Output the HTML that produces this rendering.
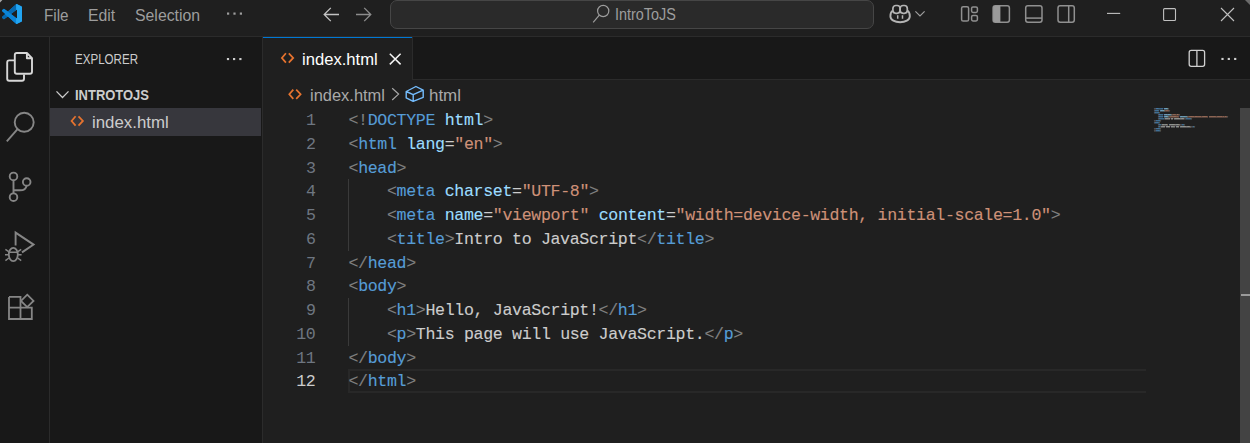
<!DOCTYPE html>
<html lang="en">
<head>
<meta charset="UTF-8">
<title>index.html - IntroToJS - Visual Studio Code</title>
<style>
*{box-sizing:border-box;margin:0;padding:0}
html,body{width:1250px;height:443px;overflow:hidden;background:#181818}
body{position:relative;font-family:"Liberation Sans",sans-serif;color:#ccc}
.abs{position:absolute}
.t{position:absolute;white-space:pre;line-height:1;transform-origin:0 0}
#titlebar{left:0;top:0;width:1250px;height:36px;background:#1f1f1f}
#tb-border{left:0;top:36px;width:1250px;height:1px;background:#2b2b2b}
.menu{color:#9d9d9d;font-size:16px}
#cmd{left:390px;top:0;width:484px;height:29px;background:#2a2a2a;border:1px solid #464646;border-radius:7px}
#activity{left:0;top:37px;width:49px;height:406px;background:#181818}
#act-border{left:49px;top:37px;width:1px;height:406px;background:#2b2b2b}
#sidebar{left:50px;top:37px;width:212px;height:406px;background:#181818}
#side-border{left:262px;top:37px;width:1px;height:406px;background:#2b2b2b}
#row-sel{left:50px;top:108px;width:211px;height:28px;background:#37373d}
#tabs{left:263px;top:37px;width:987px;height:43px;background:#181818}
#tabs-border{left:263px;top:79px;width:987px;height:1px;background:#2b2b2b}
#tab{left:263px;top:37px;width:149px;height:43px;background:#1f1f1f;border-top:1px solid #0078d4}
#tab-r{left:412px;top:37px;width:1px;height:43px;background:#2b2b2b}
#editor{left:263px;top:80px;width:987px;height:363px;background:#1f1f1f}
.ln{color:#6e7681;font-family:"Liberation Mono",monospace;font-size:16.03px;text-align:right;width:40px;left:275px}
.code{font-family:"Liberation Mono",monospace;font-size:16.03px;left:349px;color:#ccc}
.lnr,.cl{height:23.75px;line-height:23.75px;font-family:"Liberation Mono",monospace;font-size:16.6px;letter-spacing:-0.34px;white-space:pre}
.lnr{text-align:right;color:#6e7681}
.cl{color:#ccc;-webkit-text-stroke:0.12px}
.g{color:#808080}.b{color:#569cd6}.a{color:#9cdcfe}.s{color:#ce9178}
#curline{left:348px;top:369px;width:798px;height:24px;border-top:2px solid #282828;border-bottom:2px solid #282828;border-left:2px solid #282828}
.guide{width:1px;background:#3a3a3a;left:348px}
#scroll{left:1240px;top:108px;width:10px;height:335px;background:#434343}
#scroll-mark{left:1241px;top:294px;width:9px;height:2px;background:#9a9a9a}
</style>
</head>
<body>
<!-- title bar -->
<div class="abs" id="titlebar"></div>
<div class="abs" id="tb-border"></div>
<div class="t menu" id="m-file" style="left:43.5px;top:8px;transform:scaleX(.954)">File</div>
<div class="t menu" id="m-edit" style="left:87.9px;top:8px;transform:scaleX(.985)">Edit</div>
<div class="t menu" id="m-sel" style="left:135.2px;top:8px;transform:scaleX(.99)">Selection</div>
<div class="abs" id="cmd"></div>
<div class="t" id="cmd-text" style="left:615.2px;top:6.5px;transform:scaleX(.925);font-size:15.6px;color:#9d9d9d">IntroToJS</div>

<!-- activity bar -->
<div class="abs" id="activity"></div>
<div class="abs" id="act-border"></div>

<!-- side bar -->
<div class="abs" id="sidebar"></div>
<div class="abs" id="side-border"></div>
<div class="t" id="sb-title" style="left:74.5px;top:53px;transform:scaleX(.842);font-size:13.75px;color:#ccc">EXPLORER</div>
<div class="t" id="sb-folder" style="left:74.6px;top:89px;transform:scaleX(.943);font-size:13.75px;font-weight:bold;color:#ccc">INTROTOJS</div>
<div class="abs" id="row-sel"></div>
<div class="t" id="sb-file" style="left:92px;top:114px;transform:scaleX(1.035);font-size:16.25px;color:#ccc">index.html</div>

<!-- tabs -->
<div class="abs" id="tabs"></div>
<div class="abs" id="tabs-border"></div>
<div class="abs" id="tab"></div>
<div class="abs" id="tab-r"></div>
<div class="t" id="tab-label" style="left:302.2px;top:51px;transform:scaleX(1.022);font-size:16.25px;color:#fff">index.html</div>

<!-- editor -->
<div class="abs" id="editor"></div>
<div class="t" id="bc-file" style="left:309.8px;top:87px;transform:scaleX(1.012);font-size:16.25px;color:#a9a9a9">index.html</div>
<div class="t" id="bc-html" style="left:428.8px;top:87px;transform:scaleX(1.04);font-size:16.25px;color:#a9a9a9">html</div>

<div class="abs" id="curline"></div>
<div class="abs guide" style="top:179px;height:72px"></div>
<div class="abs guide" style="top:298px;height:48px"></div>


<div class="abs" id="lines" style="left:275.5px;top:109px;width:40px">
<div class="lnr">1</div><div class="lnr">2</div><div class="lnr">3</div><div class="lnr">4</div><div class="lnr">5</div><div class="lnr">6</div><div class="lnr">7</div><div class="lnr">8</div><div class="lnr">9</div><div class="lnr">10</div><div class="lnr">11</div><div class="lnr" style="color:#ccc">12</div>
</div>
<div class="abs" id="code" style="left:348.5px;top:109px">
<div class="cl" id="c1"><span class="g">&lt;!</span><span class="b">DOCTYPE</span> <span class="a">html</span><span class="g">&gt;</span></div>
<div class="cl" id="c2"><span class="g">&lt;</span><span class="b">html</span> <span class="a">lang</span>=<span class="s">"en"</span><span class="g">&gt;</span></div>
<div class="cl" id="c3"><span class="g">&lt;</span><span class="b">head</span><span class="g">&gt;</span></div>
<div class="cl" id="c4">    <span class="g">&lt;</span><span class="b">meta</span> <span class="a">charset</span>=<span class="s">"UTF-8"</span><span class="g">&gt;</span></div>
<div class="cl" id="c5">    <span class="g">&lt;</span><span class="b">meta</span> <span class="a">name</span>=<span class="s">"viewport"</span> <span class="a">content</span>=<span class="s">"width=device-width, initial-scale=1.0"</span><span class="g">&gt;</span></div>
<div class="cl" id="c6">    <span class="g">&lt;</span><span class="b">title</span><span class="g">&gt;</span>Intro to JavaScript<span class="g">&lt;/</span><span class="b">title</span><span class="g">&gt;</span></div>
<div class="cl" id="c7"><span class="g">&lt;/</span><span class="b">head</span><span class="g">&gt;</span></div>
<div class="cl" id="c8"><span class="g">&lt;</span><span class="b">body</span><span class="g">&gt;</span></div>
<div class="cl" id="c9">    <span class="g">&lt;</span><span class="b">h1</span><span class="g">&gt;</span>Hello, JavaScript!<span class="g">&lt;/</span><span class="b">h1</span><span class="g">&gt;</span></div>
<div class="cl" id="c10">    <span class="g">&lt;</span><span class="b">p</span><span class="g">&gt;</span>This page will use JavaScript.<span class="g">&lt;/</span><span class="b">p</span><span class="g">&gt;</span></div>
<div class="cl" id="c11"><span class="g">&lt;/</span><span class="b">body</span><span class="g">&gt;</span></div>
<div class="cl" id="c12"><span class="g">&lt;/</span><span class="b">html</span><span class="g">&gt;</span></div>
</div>
<div class="abs" id="mini" style="left:1154px;top:108px;transform-origin:0 0;transform:scale(0.10395,0.08421);font-weight:bold">
<div class="cl"><span class="g">&lt;!</span><span class="b">DOCTYPE</span> <span class="a">html</span><span class="g">&gt;</span></div>
<div class="cl"><span class="g">&lt;</span><span class="b">html</span> <span class="a">lang</span>=<span class="s">"en"</span><span class="g">&gt;</span></div>
<div class="cl"><span class="g">&lt;</span><span class="b">head</span><span class="g">&gt;</span></div>
<div class="cl">    <span class="g">&lt;</span><span class="b">meta</span> <span class="a">charset</span>=<span class="s">"UTF-8"</span><span class="g">&gt;</span></div>
<div class="cl">    <span class="g">&lt;</span><span class="b">meta</span> <span class="a">name</span>=<span class="s">"viewport"</span> <span class="a">content</span>=<span class="s">"width=device-width, initial-scale=1.0"</span><span class="g">&gt;</span></div>
<div class="cl">    <span class="g">&lt;</span><span class="b">title</span><span class="g">&gt;</span>Intro to JavaScript<span class="g">&lt;/</span><span class="b">title</span><span class="g">&gt;</span></div>
<div class="cl"><span class="g">&lt;/</span><span class="b">head</span><span class="g">&gt;</span></div>
<div class="cl"><span class="g">&lt;</span><span class="b">body</span><span class="g">&gt;</span></div>
<div class="cl">    <span class="g">&lt;</span><span class="b">h1</span><span class="g">&gt;</span>Hello, JavaScript!<span class="g">&lt;/</span><span class="b">h1</span><span class="g">&gt;</span></div>
<div class="cl">    <span class="g">&lt;</span><span class="b">p</span><span class="g">&gt;</span>This page will use JavaScript.<span class="g">&lt;/</span><span class="b">p</span><span class="g">&gt;</span></div>
<div class="cl"><span class="g">&lt;/</span><span class="b">body</span><span class="g">&gt;</span></div>
<div class="cl"><span class="g">&lt;/</span><span class="b">html</span><span class="g">&gt;</span></div>
</div>
<div class="abs" id="scroll"></div>
<div class="abs" id="scroll-mark"></div>

<svg class="abs" id="icons" style="left:0;top:0" width="1250" height="443" viewBox="0 0 1250 443" fill="none" stroke-linecap="butt">
<!-- vscode logo -->
<g transform="translate(2,4) scale(0.8333)">
<clipPath id="lg"><path d="M23.15 2.587L18.21.21a1.494 1.494 0 0 0-1.705.29l-9.46 8.63-4.12-3.128a.999.999 0 0 0-1.276.057L.327 7.261A1 1 0 0 0 .326 8.74L3.899 12 .326 15.26a1 1 0 0 0 .001 1.479L1.65 17.94a.999.999 0 0 0 1.276.057l4.12-3.128 9.46 8.63a1.492 1.492 0 0 0 1.704.29l4.942-2.377A1.5 1.5 0 0 0 24 20.06V3.939a1.5 1.5 0 0 0-.85-1.352zm-5.146 14.861L10.826 12l7.178-5.448v10.896z"/></clipPath>
<g clip-path="url(#lg)">
<rect x="0" y="0" width="24" height="24" fill="#0a7fd0"/>
<polygon points="0,15 17,-0.6 18.3,0 18.3,6.4 2.6,18.6 0,17.4" fill="#0568b0"/>
<polygon points="0,9 0,6.6 2.6,5.4 18.3,17.6 18.3,24 17,24.6" fill="#0b85d8"/>
<polygon points="16.9,-1 24,2 24,22 16.9,25" fill="#22a5f1"/>
</g>
</g>
<!-- menu dots -->
<g fill="#9d9d9d"><rect x="227" y="12.5" width="2.2" height="2.2"/><rect x="233.4" y="12.5" width="2.2" height="2.2"/><rect x="239.8" y="12.5" width="2.2" height="2.2"/></g>
<!-- nav arrows -->
<path d="M339 14.5H324.3M330.8 7.9L324.2 14.5L330.8 21.1" stroke="#c2c2c2" stroke-width="1.3"/>
<path d="M356 14.5H370.7M364.2 7.9L370.8 14.5L364.2 21.1" stroke="#8c8c8c" stroke-width="1.3"/>
<!-- cmd search icon -->
<circle cx="603.2" cy="11" r="5.6" stroke="#9d9d9d" stroke-width="1.2"/>
<path d="M599.3 15.2L593.2 22.4" stroke="#9d9d9d" stroke-width="1.2"/>
<!-- copilot -->
<g stroke="#b4b4b4" stroke-width="1.7">
<rect x="892.9" y="5.5" width="7.2" height="7.8" rx="3"/>
<rect x="900.1" y="5.5" width="7.2" height="7.8" rx="3"/>
<path d="M892.6 10.8C890.7 12 890.4 13.8 890.4 16.2C890.4 20 895 22.2 900.1 22.2C905.2 22.2 909.8 20 909.8 16.2C909.8 13.8 909.5 12 907.6 10.8" stroke-width="1.9"/>
<path d="M897.7 15.3V18.7M902.5 15.3V18.7" stroke-width="1.5"/>
</g>
<path d="M915.4 11.4L920 16L924.6 11.4" stroke="#9d9d9d" stroke-width="1.2"/>
<!-- layout icons -->
<g stroke="#909090" stroke-width="1.5">
<rect x="961.6" y="6.7" width="7" height="14.3" rx="1.6"/>
<rect x="971.6" y="6.9" width="5.8" height="5.6" rx="1.4"/>
<rect x="971.6" y="15.4" width="5.8" height="5.6" rx="1.4"/>
<rect x="993.1" y="5.7" width="16.3" height="16.6" rx="2.2"/>
<path d="M993.1 7.9a2.2 2.2 0 0 1 2.2-2.2H1000.4V22.3H995.3a2.2 2.2 0 0 1-2.2-2.2z" fill="#9a9a9a" stroke="none"/>
<rect x="1025.7" y="5.7" width="16.3" height="16.6" rx="2.2"/>
<path d="M1025.7 18.1H1042"/>
<rect x="1058" y="5.7" width="16.3" height="16.6" rx="2.2"/>
<path d="M1068.7 5.7V22.3"/>
</g>
<!-- window controls -->
<g stroke="#c0c0c0" stroke-width="1.1">
<path d="M1107 13.4H1120.2"/>
<rect x="1163.6" y="8.6" width="11.9" height="11.9" rx="1"/>
<path d="M1221 8L1234 21M1234 8L1221 21"/>
</g>
<polygon points="1245,0 1250,0 1250,5" fill="#6a6a6a"/>
<polygon points="0,0 2.4,0 0,2.4" fill="#a8a8a8"/>

<g id="minimap" opacity="0.3" shape-rendering="crispEdges">
<rect x="1154" y="108" width="2" height="2" fill="#808080"/>
<rect x="1156" y="108" width="7" height="2" fill="#569cd6"/>
<rect x="1164" y="108" width="4" height="2" fill="#9cdcfe"/>
<rect x="1168" y="108" width="1" height="2" fill="#808080"/>
<rect x="1154" y="110" width="1" height="2" fill="#808080"/>
<rect x="1155" y="110" width="4" height="2" fill="#569cd6"/>
<rect x="1160" y="110" width="4" height="2" fill="#9cdcfe"/>
<rect x="1164" y="110" width="1" height="2" fill="#cccccc"/>
<rect x="1165" y="110" width="4" height="2" fill="#ce9178"/>
<rect x="1169" y="110" width="1" height="2" fill="#808080"/>
<rect x="1154" y="112" width="1" height="2" fill="#808080"/>
<rect x="1155" y="112" width="4" height="2" fill="#569cd6"/>
<rect x="1159" y="112" width="1" height="2" fill="#808080"/>
<rect x="1158" y="114" width="1" height="2" fill="#808080"/>
<rect x="1159" y="114" width="4" height="2" fill="#569cd6"/>
<rect x="1164" y="114" width="7" height="2" fill="#9cdcfe"/>
<rect x="1171" y="114" width="1" height="2" fill="#cccccc"/>
<rect x="1172" y="114" width="7" height="2" fill="#ce9178"/>
<rect x="1179" y="114" width="1" height="2" fill="#808080"/>
<rect x="1158" y="116" width="1" height="2" fill="#808080"/>
<rect x="1159" y="116" width="4" height="2" fill="#569cd6"/>
<rect x="1164" y="116" width="4" height="2" fill="#9cdcfe"/>
<rect x="1168" y="116" width="1" height="2" fill="#cccccc"/>
<rect x="1169" y="116" width="10" height="2" fill="#ce9178"/>
<rect x="1180" y="116" width="7" height="2" fill="#9cdcfe"/>
<rect x="1187" y="116" width="1" height="2" fill="#cccccc"/>
<rect x="1188" y="116" width="20" height="2" fill="#ce9178"/>
<rect x="1209" y="116" width="18" height="2" fill="#ce9178"/>
<rect x="1227" y="116" width="1" height="2" fill="#808080"/>
<rect x="1158" y="118" width="1" height="2" fill="#808080"/>
<rect x="1159" y="118" width="5" height="2" fill="#569cd6"/>
<rect x="1164" y="118" width="1" height="2" fill="#808080"/>
<rect x="1165" y="118" width="5" height="2" fill="#cccccc"/>
<rect x="1171" y="118" width="2" height="2" fill="#cccccc"/>
<rect x="1174" y="118" width="10" height="2" fill="#cccccc"/>
<rect x="1184" y="118" width="2" height="2" fill="#808080"/>
<rect x="1186" y="118" width="5" height="2" fill="#569cd6"/>
<rect x="1191" y="118" width="1" height="2" fill="#808080"/>
<rect x="1154" y="120" width="2" height="2" fill="#808080"/>
<rect x="1156" y="120" width="4" height="2" fill="#569cd6"/>
<rect x="1160" y="120" width="1" height="2" fill="#808080"/>
<rect x="1154" y="122" width="1" height="2" fill="#808080"/>
<rect x="1155" y="122" width="4" height="2" fill="#569cd6"/>
<rect x="1159" y="122" width="1" height="2" fill="#808080"/>
<rect x="1158" y="124" width="1" height="2" fill="#808080"/>
<rect x="1159" y="124" width="2" height="2" fill="#569cd6"/>
<rect x="1161" y="124" width="1" height="2" fill="#808080"/>
<rect x="1162" y="124" width="6" height="2" fill="#cccccc"/>
<rect x="1169" y="124" width="11" height="2" fill="#cccccc"/>
<rect x="1180" y="124" width="2" height="2" fill="#808080"/>
<rect x="1182" y="124" width="2" height="2" fill="#569cd6"/>
<rect x="1184" y="124" width="1" height="2" fill="#808080"/>
<rect x="1158" y="126" width="1" height="2" fill="#808080"/>
<rect x="1159" y="126" width="1" height="2" fill="#569cd6"/>
<rect x="1160" y="126" width="1" height="2" fill="#808080"/>
<rect x="1161" y="126" width="4" height="2" fill="#cccccc"/>
<rect x="1166" y="126" width="4" height="2" fill="#cccccc"/>
<rect x="1171" y="126" width="4" height="2" fill="#cccccc"/>
<rect x="1176" y="126" width="3" height="2" fill="#cccccc"/>
<rect x="1180" y="126" width="11" height="2" fill="#cccccc"/>
<rect x="1191" y="126" width="2" height="2" fill="#808080"/>
<rect x="1193" y="126" width="1" height="2" fill="#569cd6"/>
<rect x="1194" y="126" width="1" height="2" fill="#808080"/>
<rect x="1154" y="128" width="2" height="2" fill="#808080"/>
<rect x="1156" y="128" width="4" height="2" fill="#569cd6"/>
<rect x="1160" y="128" width="1" height="2" fill="#808080"/>
<rect x="1154" y="130" width="2" height="2" fill="#808080"/>
<rect x="1156" y="130" width="4" height="2" fill="#569cd6"/>
<rect x="1160" y="130" width="1" height="2" fill="#808080"/>
</g>
<!-- activity bar icons -->
<g stroke="#d7d7d7" stroke-width="1.9" stroke-linejoin="round">
<path d="M14.8 60.4H9.2a2 2 0 0 0-2 2V78.7a2 2 0 0 0 2 2H22a2 2 0 0 0 2-2V74.6"/>
<path d="M26.9 53H16.8a2 2 0 0 0-2 2V71.7a2 2 0 0 0 2 2H30a2 2 0 0 0 2-2V58.2zM26.9 53V58.2H32"/>
</g>
<g stroke="#868686" stroke-width="1.9">
<circle cx="24.2" cy="122.3" r="9.5"/>
<path d="M17.3 129.3L6.8 141.4"/>
<!-- source control -->
<circle cx="13.5" cy="176.4" r="3.8"/>
<circle cx="13.5" cy="197.2" r="3.8"/>
<circle cx="26.7" cy="182" r="3.8"/>
<path d="M13.5 180.2V193.4M26.5 185.8C26 189.5 23.5 190.3 20 190.3H13.5"/>
<!-- debug -->
<path d="M15.6 245.6V232.6L33.6 244.6L22 252.4"/>
</g>
<g stroke="#868686" stroke-width="1.8">
<ellipse cx="13.3" cy="254.5" rx="4.5" ry="6.6"/>
<path d="M8.8 252.2H17.8M5.4 249.4L8.7 251.6M21.2 249.4L17.9 251.6M5 254.8H8.8M17.8 254.8H21.6M5.4 260.6L8.9 258M21.2 260.6L17.7 258" stroke-width="1.5"/>
</g>
<!-- extensions -->
<g stroke="#868686" stroke-width="1.8">
<path d="M9 296.9H20.5V307.6M9 296.9V319H31.8V307.6H9M20.5 307.6V319"/>
<path d="M27.2 294.7L33.5 300.9L27.2 307.1L21 300.9z"/>
</g>
<!-- sidebar -->
<g fill="#ccc"><rect x="226.9" y="58" width="2.2" height="2.1"/><rect x="233" y="58" width="2.2" height="2.1"/><rect x="239.3" y="58" width="2.2" height="2.1"/></g>
<path d="M56.5 91.4L62.5 97.5L68.5 91.4" stroke="#ccc" stroke-width="1.3"/>
<path d="M75.6 116.3L71.6 120.95L75.6 125.6M78.5 116.3L82.9 120.95L78.5 125.6" stroke="#e6732f" stroke-width="1.75"/>
<path d="M285.9 53.3L281.9 57.95L285.9 62.6M288.8 53.3L293.2 57.95L288.8 62.6" stroke="#e6732f" stroke-width="1.75"/>
<path d="M293.3 89.6L289.3 94.25L293.3 98.9M296.2 89.6L300.6 94.25L296.2 98.9" stroke="#e6732f" stroke-width="1.75"/>
<!-- tab close -->
<path d="M389.8 53.8L400.6 64.4M400.6 53.8L389.8 64.4" stroke="#f4f4f4" stroke-width="1.5"/>
<!-- breadcrumb -->
<path d="M392.2 88.2L398.6 94.1L392.2 100" stroke="#a9a9a9" stroke-width="1.2"/>
<path d="M406.2 91.5L415.9 86.5L423.2 90.2V97.3L413.2 101.4L406.2 97.9zM406.2 91.5L413.2 94.7L423.2 90.2M413.2 94.7V101.4" stroke="#75beff" stroke-width="1.4" stroke-linejoin="round"/>
<!-- editor actions -->
<rect x="1189.2" y="50.4" width="15.4" height="15.9" rx="2" stroke="#d0d0d0" stroke-width="1.3"/>
<path d="M1196.9 50.4V66.3" stroke="#d0d0d0" stroke-width="1.3"/>
<g fill="#d0d0d0"><rect x="1221.4" y="57.9" width="2.2" height="2.1"/><rect x="1227.7" y="57.9" width="2.2" height="2.1"/><rect x="1234.1" y="57.9" width="2.2" height="2.1"/></g>
</svg>
</body>
</html>
